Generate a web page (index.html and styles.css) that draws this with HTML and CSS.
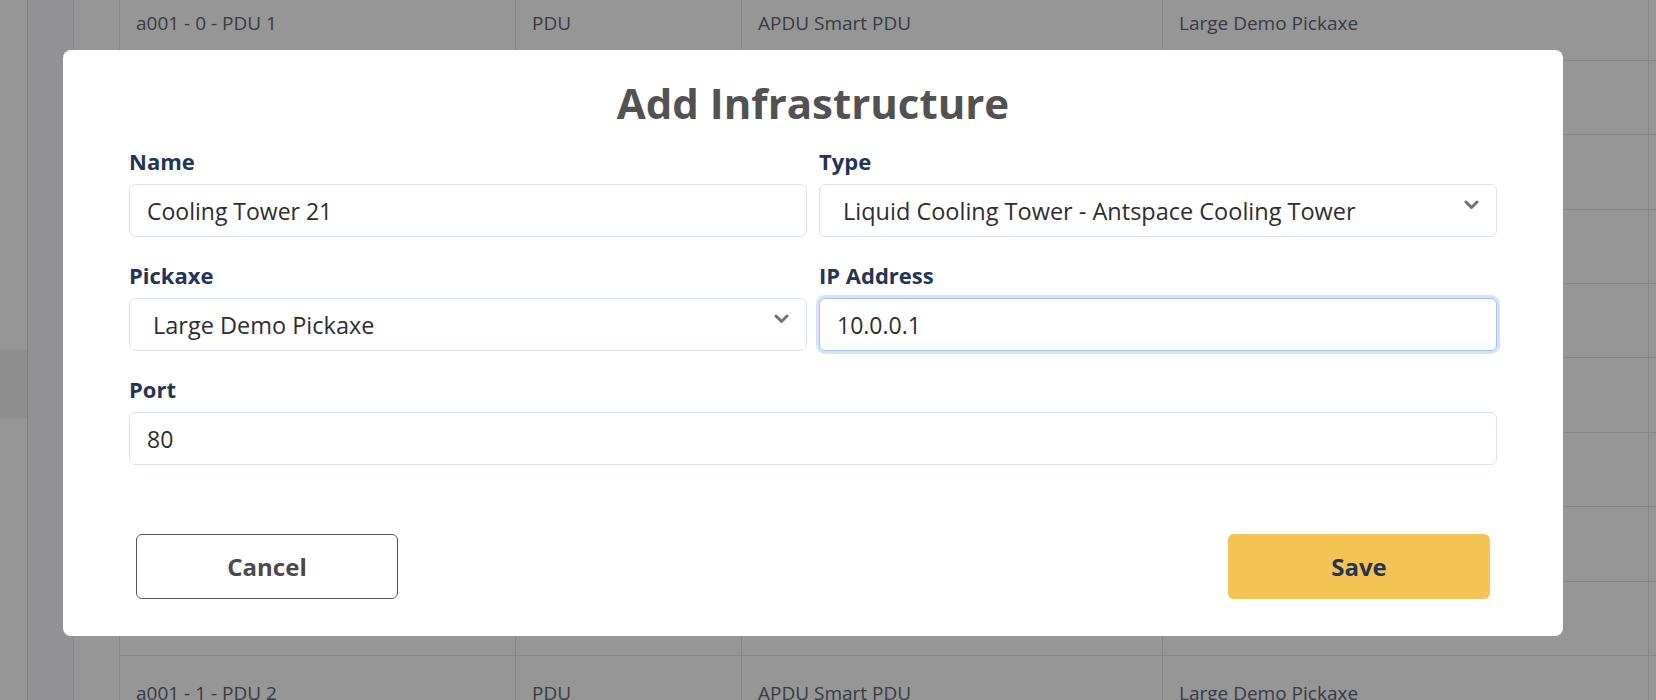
FILE: index.html
```html
<!doctype html>
<html lang="en">
<head>
    <meta charset="utf-8">
    <title>Infrastructure | Add Infrastructure</title>
    <meta name="viewport" content="width=device-width, initial-scale=1.0">
    <link rel="stylesheet" href="styles.css">
</head>
<body>
    <div class="app">
        <aside class="sidebar">
            <div class="nav-item active"></div>
        </aside>
        <main class="main">
            <div class="panel">
                <table class="grid">
                    <tbody>
                        <tr><td>a001 - 0 - PDU 1</td><td>PDU</td><td>APDU Smart PDU</td><td>Large Demo Pickaxe</td><td></td></tr>
                        <tr><td></td><td></td><td></td><td></td><td></td></tr>
                        <tr><td></td><td></td><td></td><td></td><td></td></tr>
                        <tr><td></td><td></td><td></td><td></td><td></td></tr>
                        <tr><td></td><td></td><td></td><td></td><td></td></tr>
                        <tr><td></td><td></td><td></td><td></td><td></td></tr>
                        <tr><td></td><td></td><td></td><td></td><td></td></tr>
                        <tr><td></td><td></td><td></td><td></td><td></td></tr>
                        <tr><td></td><td></td><td></td><td></td><td></td></tr>
                        <tr><td>a001 - 1 - PDU 2</td><td>PDU</td><td>APDU Smart PDU</td><td>Large Demo Pickaxe</td><td></td></tr>
                    </tbody>
                </table>
            </div>
        </main>
    </div>

    <div class="overlay"></div>

    <div class="modal">
        <h1 class="modal-title">Add Infrastructure</h1>
        <form class="modal-form">
            <div class="field-row two">
                <div class="field">
                    <label for="name">Name</label>
                    <input id="name" type="text" value="Cooling Tower 21">
                </div>
                <div class="field">
                    <label for="type">Type</label>
                    <div class="select">
                        <select id="type">
                            <option>Liquid Cooling Tower - Antspace Cooling Tower</option>
                        </select>
                        <svg class="chevron" width="15" height="10" viewBox="0 0 15 10"><path d="M2 2l5.5 5.5L13 2" fill="none" stroke="#6b7280" stroke-width="3" stroke-linecap="round" stroke-linejoin="round"/></svg>
                    </div>
                </div>
            </div>
            <div class="field-row two">
                <div class="field">
                    <label for="pickaxe">Pickaxe</label>
                    <div class="select">
                        <select id="pickaxe">
                            <option>Large Demo Pickaxe</option>
                        </select>
                        <svg class="chevron" width="15" height="10" viewBox="0 0 15 10"><path d="M2 2l5.5 5.5L13 2" fill="none" stroke="#6b7280" stroke-width="3" stroke-linecap="round" stroke-linejoin="round"/></svg>
                    </div>
                </div>
                <div class="field">
                    <label for="ip">IP Address</label>
                    <input id="ip" class="focused" type="text" value="10.0.0.1">
                </div>
            </div>
            <div class="field-row">
                <div class="field">
                    <label for="port">Port</label>
                    <input id="port" type="text" value="80">
                </div>
            </div>
            <div class="actions">
                <button type="button" class="btn btn-cancel">Cancel</button>
                <button type="submit" class="btn btn-save">Save</button>
            </div>
        </form>
    </div>
</body>
</html>
```

FILE: styles.css
```css
* {
    box-sizing: border-box;
}
body {
    margin: 0;
    background-color: #fff;
    font-family: 'Open Sans', 'Noto Sans', sans-serif;
    overflow: hidden;
    height: 700px;
}
.app {
    display: flex;
    height: 700px;
    overflow: hidden;
}
.sidebar {
    width: 28px;
    flex-shrink: 0;
    background-color: #fff;
    border-right: 1px solid #d4d7e2;
    padding-top: 350px;
}
.nav-item {
    height: 68px;
}
.nav-item.active {
    background-color: #f2f2f2;
}
.main {
    flex: 1;
    background-color: #f8f9fd;
    padding-left: 45px;
    overflow: hidden;
}
.panel {
    min-height: 100%;
    background-color: #fff;
    border-left: 1px solid #e8e8ec;
    padding-left: 45px;
}
.grid {
    border-collapse: collapse;
    margin-top: -14px;
    border-left: 1px solid #e8e8ec;
    table-layout: fixed;
    width: 1600px;
}
.grid td {
    height: 74.4px;
    border-bottom: 1px solid #e6e6e6;
    border-right: 1px solid #e6e6e6;
    padding: 0 16px;
    font-size: 19px;
    color: #5f6678;
    white-space: nowrap;
}
.grid td:nth-child(1) { width: 396px; }
.grid td:nth-child(2) { width: 226px; }
.grid td:nth-child(3) { width: 421px; }
.grid td:nth-child(4) { width: 486px; }

.overlay {
    position: fixed;
    inset: 0;
    background-color: rgba(0, 0, 0, 0.41);
}
.modal {
    position: fixed;
    left: 63px;
    top: 50px;
    width: 1500px;
    background-color: #fff;
    border-radius: 8px;
    padding: 28px 66px 37px;
}
.modal-title {
    margin: 0 0 18px;
    text-align: center;
    font-size: 42px;
    line-height: 50px;
    font-weight: 700;
    color: #525252;
}
.field-row {
    margin-bottom: 23px;
}
.field-row.two {
    display: grid;
    grid-template-columns: 1fr 1fr;
    gap: 12px;
}
.field label {
    display: block;
    font-size: 22px;
    line-height: 30px;
    font-weight: 700;
    color: #243455;
    margin-bottom: 8px;
}
.field input, .field select {
    display: block;
    width: 100%;
    height: 53px;
    border: 1px solid #dde3ea;
    border-radius: 6px;
    background-color: #fff;
    padding: 0 17px;
    font-family: inherit;
    font-size: 23px;
    color: #2e2e2e;
    outline: none;
}
.field input.focused {
    border-color: #a7c2f2;
    box-shadow: 0 0 0 3px #d4e2fc;
}
.select {
    position: relative;
}
.field select {
    appearance: none;
    -webkit-appearance: none;
    padding-left: 23px;
    font-size: 23.5px;
}
.chevron {
    position: absolute;
    right: 18px;
    top: 16px;
    pointer-events: none;
}
.actions {
    display: flex;
    justify-content: space-between;
    padding: 0 7px;
    margin-top: 69px;
}
.btn {
    width: 262px;
    height: 65px;
    border-radius: 6px;
    font-family: inherit;
    font-size: 24px;
    font-weight: 700;
    cursor: pointer;
}
.btn-cancel {
    background-color: #fff;
    border: 1px solid #555;
    color: #4a4a4a;
}
.btn-save {
    background-color: #f3c453;
    border: none;
    color: #253558;
}
```
